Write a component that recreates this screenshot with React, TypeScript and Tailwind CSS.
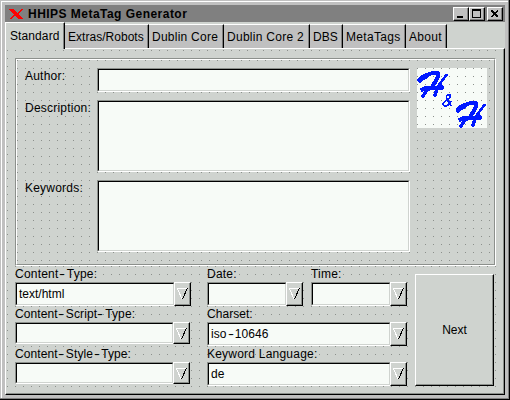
import React from "react";

const dots = "bg-[conic-gradient(from_90deg_at_7px_7px,#8c908c_25%,transparent_0)] bg-[length:8px_8px]";

function Tab({ label, width, spacing }: { label: string; width: string; spacing: string }) {
  return (
    <div className={`${width} h-[24px] shrink-0 border-t border-white border-r border-r-black bg-[#c0c0c0] shadow-[inset_-1px_0_#808080]`}>
      <span className={`block whitespace-nowrap pl-[3px] pt-[3px] leading-[18px] ${spacing}`}>{label}</span>
    </div>
  );
}

function Field({ className, children }: { className: string; children?: React.ReactNode }) {
  return (
    <div className={`${className} border border-t-[#8c908c] border-l-[#8c908c] border-r-white border-b-white`}>
      <div className="flex h-full w-full items-center border border-t-black border-l-black border-r-[#cfd3cf] border-b-[#cfd3cf] bg-[#f7fbf7] pl-[2px]">{children}</div>
    </div>
  );
}

function Combo({ width, height = "h-[24px]", children }: { width: string; height?: string; children?: React.ReactNode }) {
  return (
    <div className="h-[24px]">
      <div className={`${width} ${height} flex`}>
        <Field className="h-full min-w-0 flex-1">{children}</Field>
        <div className="-ml-px h-full w-[17px] border border-t-white border-l-white border-r-black border-b-black bg-[#cfd3cf] shadow-[inset_-1px_-1px_#8c908c]">
          <svg width="15" height="20" viewBox="0 0 15 20" shapeRendering="crispEdges" fill="none">
            <path d="M2 5.5H12M2.5 6L7 16" stroke="#fff" />
            <path d="M12.5 5L7.5 16" stroke="#000" />
          </svg>
        </div>
      </div>
    </div>
  );
}

function Label({ children, spacing = "tracking-[0.22px]" }: { children: React.ReactNode; spacing?: string }) {
  return <div className={`h-[16px] whitespace-nowrap leading-[16px] ${spacing}`}>{children}</div>;
}

function Dash({ className = "ml-px mr-[3px]" }: { className?: string }) {
  return <span className={`inline-block scale-x-[1.5] ${className}`}>-</span>;
}

function WinButton({ children }: { children: React.ReactNode }) {
  return (
    <div className="h-[14px] w-[16px] border border-t-white border-l-white border-r-black border-b-black bg-[#c0c0c0] shadow-[inset_-1px_-1px_#808080]">
      <svg width="14" height="12" viewBox="0 0 14 12" shapeRendering="crispEdges" fill="none" stroke="#000">{children}</svg>
    </div>
  );
}

function H() {
  return (
    <g strokeLinecap="round" strokeLinejoin="round">
      <path d="M3 12L5 10L9 8" strokeWidth="5" />
      <path d="M8 7.5L14 5.5L21 5L21.5 7L20 11L15 19" strokeWidth="4" />
      <path d="M14 20L10 22L6 28" strokeWidth="3.4" />
      <path d="M29.5 7L27 10L22 17" strokeWidth="2.6" />
      <path d="M23 16L20 21L18 27" strokeWidth="3.6" />
      <path d="M5.5 21.5L8 20.5L17 20L25 19.5" strokeWidth="4.4" />
    </g>
  );
}

export default function App() {
  return (
    <div className="flex h-[400px] w-[510px] flex-col overflow-hidden border-r border-b border-black bg-[#c0c0c0] font-['Liberation_Sans',Arial,sans-serif] text-[12px] text-black shadow-[inset_1px_1px_#cfd3cf]">
      <div className="flex h-[399px] w-[509px] flex-col shadow-[inset_-1px_-1px_#808080,inset_1px_1px_#c0c0c0,inset_2px_2px_#fff]">
        <header className="ml-[5px] mt-[5px] flex h-[17px] w-[500px] shrink-0 items-center bg-[#808080] pr-[2px]">
          <svg className="ml-[4px] shrink-0" width="15" height="12" viewBox="0 0 15 12" shapeRendering="crispEdges">
            <path d="M0 1H4.5L14 11H9.5Z" fill="red" />
            <path d="M14 1L8.5 5.5M6 7L1 11" stroke="red" strokeWidth="1.3" fill="none" />
          </svg>
          <h1 className="ml-[4px] flex-1 whitespace-nowrap text-[12px] font-bold tracking-[0.47px]">HHIPS MetaTag Generator</h1>
          <WinButton><path d="M3 8.5H9M3 9.5H9" /></WinButton>
          <WinButton><path d="M2 1.5H11M2 2.5H11M2.5 2V10M10.5 2V10M2 9.5H11" /></WinButton>
          <div className="w-[2px]" />
          <WinButton><path d="M3.5 2.5L10 9M10 2.5L3.5 9" strokeWidth="1.6" /></WinButton>
        </header>
        <div className="ml-[5px] flex h-[26px] w-[500px] shrink-0 items-end bg-[#cfd3cf]">
          <div className="relative z-10 -mb-px h-[27px] w-[60px] shrink-0 border-t border-l border-r border-t-white border-l-white border-r-black bg-[#cfd3cf] shadow-[inset_-1px_0_#808080]">
            <span className="block pl-[4px] pt-[4px] leading-[18px] tracking-[0.1px]">Standard</span>
          </div>
          <Tab label="Extras/Robots" width="w-[84px]" spacing="tracking-[0.03px]" />
          <Tab label="Dublin Core" width="w-[75px]" spacing="tracking-[0.25px]" />
          <Tab label="Dublin Core 2" width="w-[86px]" spacing="tracking-[0.28px]" />
          <Tab label="DBS" width="w-[33px]" spacing="tracking-[0.1px]" />
          <Tab label="MetaTags" width="w-[63px]" spacing="tracking-[0.3px]" />
          <Tab label="About" width="w-[41px]" spacing="tracking-[0.3px]" />
        </div>
        <main className="ml-[5px] h-[347px] w-[500px] shrink-0 border border-t-white border-l-white border-r-black border-b-black bg-[#cfd3cf] shadow-[inset_-1px_-1px_#8c908c]">
          <div className={`h-[344px] w-[497px] bg-[position:-6px_-6px] pl-[9px] pt-[9px] ${dots}`}>
            <section className="h-[208px] w-[481px] border border-r-white border-b-white border-t-[#8c908c] border-l-[#8c908c] bg-[#cfd3cf]">
              <div className={`flex h-full border border-t-white border-l-white border-r-[#8c908c] border-b-[#8c908c] bg-[position:1px_1px] ${dots}`}>
                <div className="w-[80px] shrink-0 pl-[8px]">
                  <div className="pt-[8px]"><Label>Author:</Label></div>
                  <div className="pt-[16px]"><Label>Description:</Label></div>
                  <div className="pt-[64px]"><Label>Keywords:</Label></div>
                </div>
                <div className="flex w-[313px] shrink-0 flex-col gap-[8px] pt-[8px]">
                  <Field className="h-[24px]" />
                  <Field className="h-[72px]" />
                  <Field className="h-[72px]" />
                </div>
                <div className={`ml-[7px] mt-[8px] h-[60px] w-[70px] shrink-0 bg-[#f7fbf7] bg-[position:1px_1px] ${dots}`}>
                  <svg width="70" height="60" viewBox="0 0 70 60" fill="none" stroke="#0018ff" shapeRendering="crispEdges">
                    <H />
                    <g transform="translate(38 30)"><H /></g>
                    <path d="M34 38L29.5 30Q29 27 32 26.5Q35 27.5 32 30.5Q24.5 35 26.5 37.5Q30 39.5 34.5 33" strokeWidth="1.8" />
                  </svg>
                </div>
              </div>
            </section>
            <div className="flex">
              <div className="w-[192px]">
                <Label>Content<Dash />Type:</Label>
                <Combo width="w-[176px]">text/html</Combo>
                <Label spacing="tracking-[0.1px]">Content<Dash />Script<Dash />Type:</Label>
                <Combo width="w-[175px]" height="h-[22px]" />
                <Label spacing="tracking-[0.1px]">Content<Dash />Style<Dash className="mx-[2px]" />Type:</Label>
                <Combo width="w-[175px]" height="h-[22px]" />
              </div>
              <div className="w-[208px]">
                <div className="flex">
                  <div className="w-[104px]"><Label>Date:</Label><Combo width="w-[96px]" /></div>
                  <div className="w-[96px]"><Label>Time:</Label><Combo width="w-[96px]" /></div>
                </div>
                <Label spacing="tracking-[0.05px]">Charset:</Label>
                <Combo width="w-[200px]"><span className="tracking-[0.1px]">iso<Dash className="mx-[2px]" />10646</span></Combo>
                <Label>Keyword Language:</Label>
                <Combo width="w-[200px]">de</Combo>
              </div>
              <button className="mt-[8px] h-[112px] w-[79px] border border-t-white border-l-white border-r-black border-b-black bg-[#cfd3cf] shadow-[inset_-1px_-1px_#8c908c]">Next</button>
            </div>
          </div>
        </main>
      </div>
    </div>
  );
}
